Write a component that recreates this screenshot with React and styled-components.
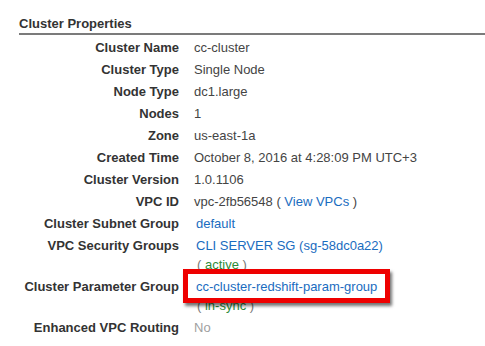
import React from 'react';
import styled, { createGlobalStyle } from 'styled-components';

const GlobalStyle = createGlobalStyle`
  body {
    margin: 0;
    background: #fff;
    font-family: 'Liberation Sans', Arial, sans-serif;
  }
`;

const Page = styled.div`
  position: relative;
  width: 485px;
  height: 346px;
  overflow: hidden;
  padding: 16px 0 0 19px;
  box-sizing: border-box;
`;

const Title = styled.div`
  font-size: 13px;
  font-weight: bold;
  color: #333;
  line-height: 16px;
  padding-bottom: 1px;
  border-bottom: 2px solid #7b7b7b;
`;

const Table = styled.div`
  display: grid;
  grid-template-columns: 160px 1fr;
  column-gap: 15px;
  margin-top: 1px;
  font-size: 13px;
  line-height: 19px;
`;

const Label = styled.div`
  text-align: right;
  font-weight: bold;
  color: #333;
  padding: 1.5px 0;
  white-space: nowrap;
`;

const Value = styled.div`
  color: ${(p) => (p.$muted ? '#a0a0a0' : '#444')};
  padding: 1.5px 0;
  padding-left: ${(p) => (p.$indent ? '2px' : '0')};
  white-space: nowrap;
`;

const Link = styled.a`
  color: #1a6cc0;
  text-decoration: none;
`;

const Status = styled.div`
  color: #777;
  padding-left: 1px;
  span {
    color: #2e8b3a;
  }
`;

const Highlight = styled.div`
  position: absolute;
  left: 183px;
  top: 269px;
  width: 207px;
  height: 34px;
  box-sizing: border-box;
  border: 5px solid #ee0000;
  box-shadow: 2px 3px 3px rgba(0, 0, 0, 0.55);
  pointer-events: none;
`;

const rows = [
  ['Cluster Name', 'cc-cluster'],
  ['Cluster Type', 'Single Node'],
  ['Node Type', 'dc1.large'],
  ['Nodes', '1'],
  ['Zone', 'us-east-1a'],
  ['Created Time', 'October 8, 2016 at 4:28:09 PM UTC+3'],
  ['Cluster Version', '1.0.1106'],
];

export default function App() {
  return (
    <Page>
      <GlobalStyle />
      <Title>Cluster Properties</Title>
      <Table>
        {rows.map(([label, value]) => (
          <React.Fragment key={label}>
            <Label>{label}</Label>
            <Value>{value}</Value>
          </React.Fragment>
        ))}
        <Label>VPC ID</Label>
        <Value>
          vpc-2fb56548 ( <Link href="#">View VPCs</Link> )
        </Value>
        <Label>Cluster Subnet Group</Label>
        <Value $indent>
          <Link href="#">default</Link>
        </Value>
        <Label>VPC Security Groups</Label>
        <Value $indent>
          <Link href="#">CLI SERVER SG (sg-58dc0a22)</Link>
          <Status>
            ( <span>active</span> )
          </Status>
        </Value>
        <Label>Cluster Parameter Group</Label>
        <Value $indent>
          <Link href="#">cc-cluster-redshift-param-group</Link>
          <Status>
            ( <span>in-sync</span> )
          </Status>
        </Value>
        <Label>Enhanced VPC Routing</Label>
        <Value $muted>No</Value>
      </Table>
      <Highlight />
    </Page>
  );
}
